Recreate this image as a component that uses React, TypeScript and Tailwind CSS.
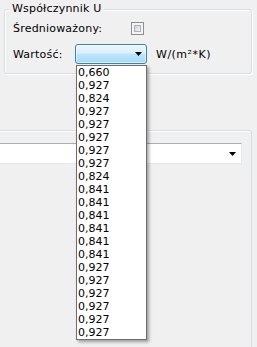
const values = [
  '0,660', '0,927', '0,824', '0,927', '0,927', '0,927', '0,927', '0,927', '0,824',
  '0,841', '0,841', '0,841', '0,841', '0,841', '0,841',
  '0,927', '0,927', '0,927', '0,927', '0,927', '0,927',
];

function Arrow() {
  return (
    <svg width="7" height="4" viewBox="0 0 7 4" className="block">
      <path d="M0 0H7L3.5 4Z" fill="#000" />
    </svg>
  );
}

export default function App() {
  return (
    <div
      className="relative w-[257px] h-[347px] overflow-hidden bg-[#f0f0f0] text-[11px] leading-[13px] text-black"
      style={{ fontFamily: '"DejaVu Sans", Verdana, sans-serif' }}
    >
      {/* Współczynnik U group */}
      <div className="relative ml-[4px] mt-[9px] w-[248px] h-[65px] rounded-[3px] border border-[#d5dfe5] shadow-[1px_1px_0_#ffffff,inset_1px_1px_0_#ffffff]">
        <span className="absolute left-[5px] top-[-8px] px-[2px] bg-[#f0f0f0] tracking-[0.2px]">Współczynnik U</span>
        <div className="flex flex-col gap-[9px] pl-[8px] pt-[12px] tracking-[0.2px]">
          <div className="flex items-center h-[13px]">
            <span className="w-[118px]">Średnioważony:</span>
            <div className="w-[13px] h-[13px] border border-[#8e8f8f] bg-[#f4f4f4] p-[2px]">
              <div className="w-full h-full border border-[#aeb2b8] bg-[linear-gradient(135deg,#c9cdd3,#f7f7f7)]" />
            </div>
          </div>
          <div className="flex items-center h-[20px]">
            <span className="w-[62px]">Wartość:</span>
            <div className="flex items-center justify-end w-[72px] h-[20px] pr-[4px] rounded-[3px] border border-[#3c7fb1] bg-[linear-gradient(to_bottom,#eaf6fd_0%,#d9f0fc_45%,#bee6fd_50%,#a7d9f5_100%)] shadow-[inset_0_0_0_1px_rgba(255,255,255,0.6)]">
              <Arrow />
            </div>
            <span className="ml-[9px] tracking-[0.5px]">W/(m²*K)</span>
          </div>
        </div>
      </div>

      {/* lower panel */}
      <div className="ml-[-10px] mt-[56px] w-[262px] h-[300px] rounded-[3px] border border-[#d5dfe5] shadow-[inset_1px_1px_0_#ffffff]">
        <div className="ml-[4px] mt-[12px] w-[247px] h-[21px] flex items-center justify-end pr-[5px] bg-white border border-[#e3e9ef] border-t-[#abadb3]">
          <Arrow />
        </div>
      </div>

      {/* open dropdown list */}
      <div className="absolute left-[76px] top-[65px] w-[71px] bg-white border border-[#6e6e6e] shadow-[2px_2px_3px_rgba(0,0,0,0.35)]">
        {values.map((v, i) => (
          <div key={i} className="h-[13px] pl-[1px]">{v}</div>
        ))}
      </div>
    </div>
  );
}
